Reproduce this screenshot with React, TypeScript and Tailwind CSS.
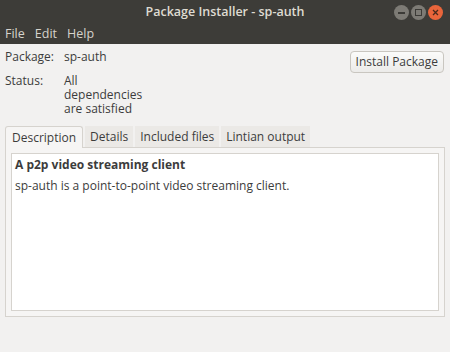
import React from "react";

const tabs = ["Description", "Details", "Included files", "Lintian output"];

function WinButton({ kind }: { kind: "min" | "max" | "close" }) {
  if (kind === "close") {
    return (
      <div className="w-[15px] h-[15px] rounded-full bg-[#e9653b] flex items-center justify-center">
        <svg width="7" height="7" viewBox="0 0 7 7">
          <path d="M1 1L6 6M6 1L1 6" stroke="#4a2a1c" strokeWidth="1.3" />
        </svg>
      </div>
    );
  }
  return (
    <div className="w-[15px] h-[15px] rounded-full bg-[#7d7b75] flex items-center justify-center">
      {kind === "min" ? (
        <div className="w-[7px] h-[2px] bg-[#3c3b37]" />
      ) : (
        <div className="w-[7px] h-[7px] border border-[#3c3b37]" />
      )}
    </div>
  );
}

export default function App() {
  return (
    <div
      className="w-[450px] h-[352px] bg-[#f2f1f0] text-[#3c3c3c] text-[12px] flex flex-col overflow-hidden"
      style={{ fontFamily: '"Open Sans", "DejaVu Sans", sans-serif' }}
    >
      {/* title + menu */}
      <div className="bg-[#3d3c38] text-[#dfdbd2]">
        <div className="h-[24px] relative flex items-center justify-center">
          <span className="font-semibold text-[12.5px]">Package Installer - sp-auth</span>
          <div className="absolute right-[7px] top-[5px] flex gap-[2px]">
            <WinButton kind="min" />
            <WinButton kind="max" />
            <WinButton kind="close" />
          </div>
        </div>
        <div className="h-[20px] flex items-center gap-[10px] px-[5px] text-[12.5px] text-[#d6d3cc]">
          <span>File</span>
          <span>Edit</span>
          <span>Help</span>
        </div>
      </div>

      {/* info */}
      <div className="flex justify-between pl-[5px] pr-[6px] pt-[5px]">
        <div className="grid grid-cols-[59px_1fr] gap-y-[10px] leading-[14px]">
          <span className="pt-[1px]">Package:</span>
          <span className="pt-[1px]">sp-auth</span>
          <span>Status:</span>
          <span>
            All
            <br />
            dependencies
            <br />
            are satisfied
          </span>
        </div>
        <button className="h-[22px] mt-[2px] px-[5px] rounded-[4px] border border-[#c9c6c0] bg-gradient-to-b from-[#fbfbfa] to-[#ecebe9] text-[12px] text-[#3c3c3c] leading-none">
          Install Package
        </button>
      </div>

      {/* notebook */}
      <div className="mx-[5px] mt-[9px] flex flex-col">
        <div className="flex items-end h-[22px]">
          {tabs.map((t, i) => (
            <div
              key={t}
              className={
                i === 0
                  ? "h-[22px] px-[6px] flex items-center border border-b-0 border-[#d6d3ce] rounded-t-[3px] bg-[#f6f5f4] relative top-[1px] z-10"
                  : "h-[21px] px-[5px] ml-[2px] flex items-center bg-[#ebe9e6]"
              }
            >
              {t}
            </div>
          ))}
        </div>
        <div className="h-[170px] border border-[#d6d3ce] bg-[#f6f5f4] p-[5px]">
          <div className="h-full border border-[#d6d3ce] bg-white px-[3px] leading-[21px]">
            <div className="font-bold">A p2p video streaming client</div>
            <div>sp-auth is a point-to-point video streaming client.</div>
          </div>
        </div>
      </div>
    </div>
  );
}
